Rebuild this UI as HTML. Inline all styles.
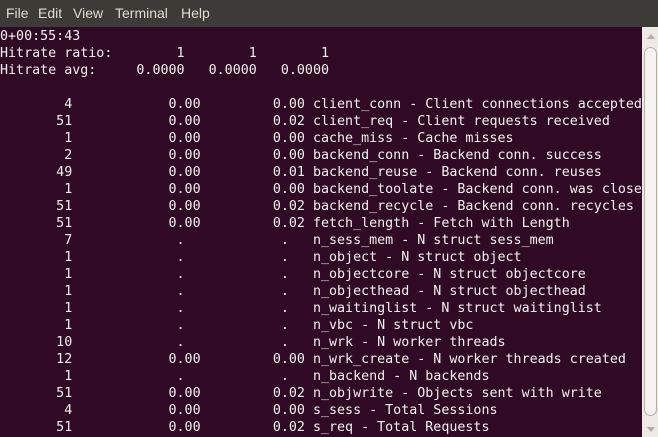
<!DOCTYPE html>
<html><head><style>
html,body{margin:0;padding:0;width:658px;height:437px;overflow:hidden;background:#300a24}
#menu{position:absolute;left:0;top:0;width:658px;height:27px;background:#3c3b37;color:#dfdbd2;font:14px "Liberation Sans",sans-serif}
#menu span{position:absolute;top:5px}
pre{position:absolute;left:0;top:28px;margin:0;font:13.33px/17px "DejaVu Sans Mono","Liberation Mono",monospace;color:#f2f2ee;white-space:pre}
#sb{position:absolute;left:642px;top:27px;width:16px;height:410px;background:#ede9e3}
#th{position:absolute;left:644px;top:47px;width:13px;height:369px;background:#f5f3ef;border:1px solid #b9b1a3;border-radius:7px;box-sizing:border-box}
.ar{position:absolute;left:647px;width:0;height:0;border-left:4px solid transparent;border-right:4px solid transparent}
</style></head><body>
<div id="menu"><span style="left:6px">File</span><span style="left:38px">Edit</span><span style="left:73px">View</span><span style="left:115px">Terminal</span><span style="left:181px">Help</span></div>
<pre>0+00:55:43
Hitrate ratio:        1        1        1
Hitrate avg:     0.0000   0.0000   0.0000

        4            0.00         0.00 client_conn - Client connections accepted
       51            0.00         0.02 client_req - Client requests received
        1            0.00         0.00 cache_miss - Cache misses
        2            0.00         0.00 backend_conn - Backend conn. success
       49            0.00         0.01 backend_reuse - Backend conn. reuses
        1            0.00         0.00 backend_toolate - Backend conn. was closed
       51            0.00         0.02 backend_recycle - Backend conn. recycles
       51            0.00         0.02 fetch_length - Fetch with Length
        7             .            .   n_sess_mem - N struct sess_mem
        1             .            .   n_object - N struct object
        1             .            .   n_objectcore - N struct objectcore
        1             .            .   n_objecthead - N struct objecthead
        1             .            .   n_waitinglist - N struct waitinglist
        1             .            .   n_vbc - N struct vbc
       10             .            .   n_wrk - N worker threads
       12            0.00         0.00 n_wrk_create - N worker threads created
        1             .            .   n_backend - N backends
       51            0.00         0.02 n_objwrite - Objects sent with write
        4            0.00         0.00 s_sess - Total Sessions
       51            0.00         0.02 s_req - Total Requests</pre>
<div id="sb"></div><div id="th"></div>
<div class="ar" style="top:34px;border-bottom:5px solid #b5ad9f"></div>
<div class="ar" style="top:427px;border-top:5px solid #b5ad9f"></div>
</body></html>
